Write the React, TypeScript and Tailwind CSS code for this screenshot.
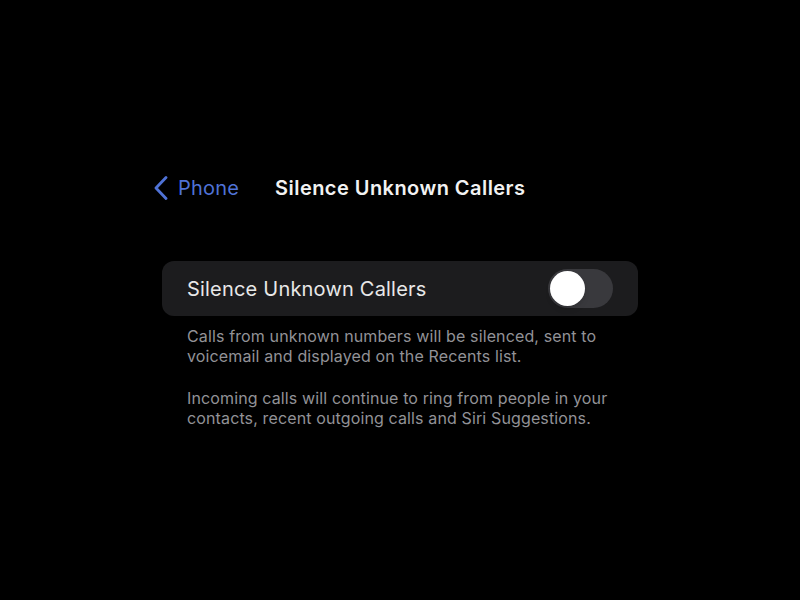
import { useState } from 'react'

function Toggle({ on, onChange }: { on: boolean; onChange: (v: boolean) => void }) {
  return (
    <button
      onClick={() => onChange(!on)}
      className={`relative h-[39px] w-[65px] rounded-full p-[2px] transition-colors ${on ? 'bg-[#30d158]' : 'bg-[#39393d]'}`}
    >
      <span
        className={`block h-[35px] w-[35px] rounded-full bg-white shadow-md transition-transform ${on ? 'translate-x-[26px]' : 'translate-x-0'}`}
      />
    </button>
  )
}

export default function App() {
  const [silenced, setSilenced] = useState(false)

  return (
    <div className="min-h-[600px] w-full bg-black font-['Inter',sans-serif] text-white">
      <div className="mx-auto w-[476px] pt-[174px]">
        {/* Nav bar */}
        <div className="flex h-[28px] items-center">
          <button className="-ml-[10px] flex items-center text-[#4f72d6]">
            <svg width="18" height="24" viewBox="0 0 18 24" fill="none" className="mr-[8px]">
              <path d="M14 1.5 L4 12 L14 22.5" stroke="currentColor" strokeWidth="2.8" strokeLinecap="round" strokeLinejoin="round" />
            </svg>
            <span className="text-[20px] tracking-[0.2px]">Phone</span>
          </button>
          <h1 className="ml-[36px] text-[20px] font-semibold tracking-[0.45px] text-[#f2f2f2]">
            Silence Unknown Callers
          </h1>
        </div>

        {/* Setting row */}
        <div className="mt-[59px] flex h-[55px] items-center justify-between rounded-[12px] bg-[#1c1c1e] pl-[25px] pr-[25px]">
          <span className="text-[20px] tracking-[0.2px] text-[#e8e8e8]">Silence Unknown Callers</span>
          <Toggle on={silenced} onChange={setSilenced} />
        </div>

        {/* Footer notes */}
        <div className="mt-[10px] space-y-[22px] pl-[25px] pr-[15px] text-[16px] leading-[20px] tracking-[0.13px] text-[#929297]">
          <p>
            Calls from unknown numbers will be silenced, sent to voicemail and displayed on the Recents list.
          </p>
          <p>
            Incoming calls will continue to ring from people in your contacts, recent outgoing calls and Siri Suggestions.
          </p>
        </div>
      </div>
    </div>
  )
}
